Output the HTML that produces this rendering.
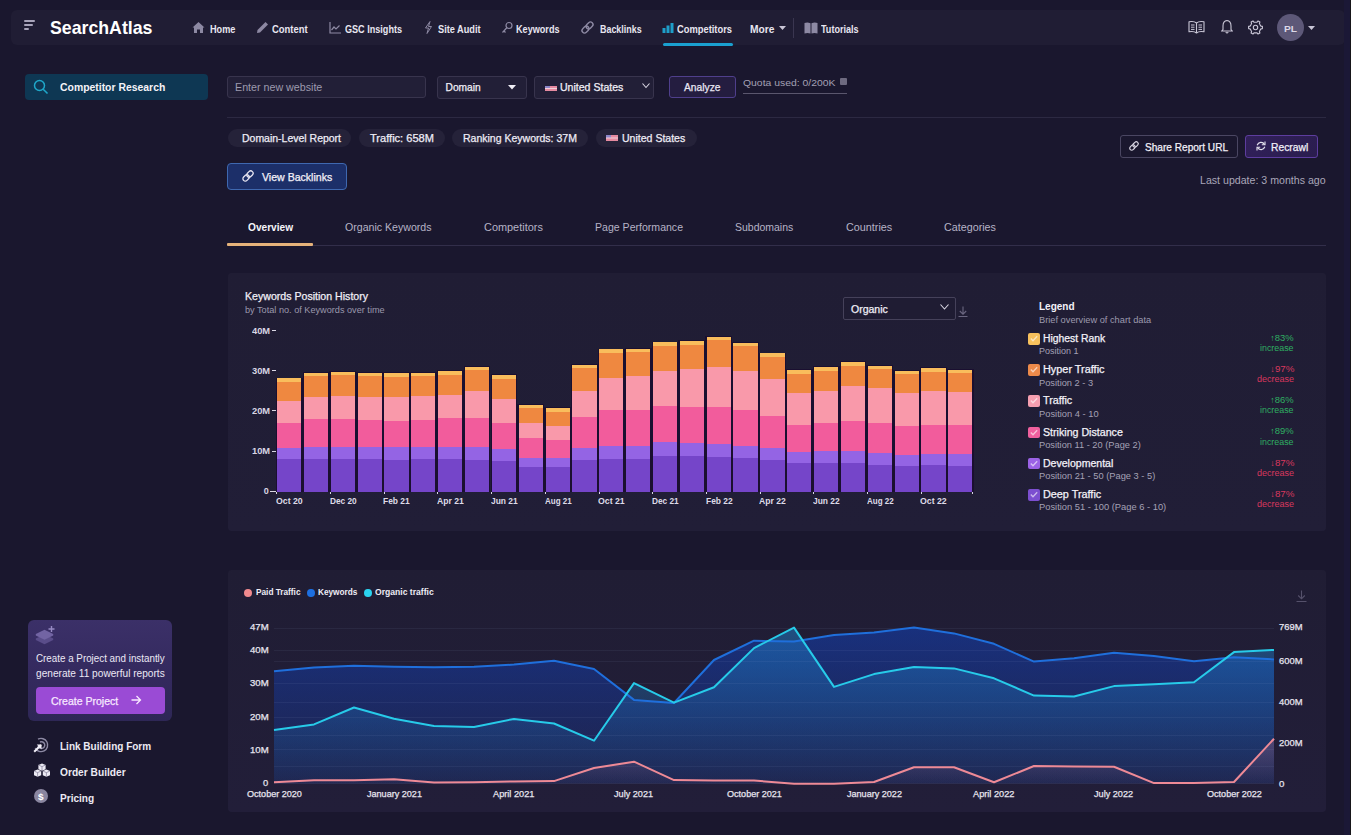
<!DOCTYPE html>
<html><head><meta charset="utf-8"><title>SearchAtlas - Competitor Research</title>
<style>
html,body{margin:0;padding:0;background:#1a172e;}
body{width:1351px;height:835px;overflow:hidden;position:relative;font-family:"Liberation Sans",sans-serif;}
.t{position:absolute;white-space:nowrap;transform-origin:0 0;}
.b{position:absolute;}
</style></head><body>
<div class="b" style="left:11px;top:10px;width:1334px;height:35px;background:#201d34;border-radius:6px;"></div>
<div class="b" style="left:24px;top:20px;width:11px;height:2px;background:#a8a4ba;border-radius:1px;"></div>
<div class="b" style="left:24px;top:24px;width:9px;height:2px;background:#a8a4ba;border-radius:1px;"></div>
<div class="b" style="left:24px;top:28px;width:5px;height:2px;background:#a8a4ba;border-radius:1px;"></div>
<div class="t" style="left:49.60px;top:19.19px;font-size:18.2px;line-height:18.2px;font-weight:bold;color:#ffffff;transform:scaleX(0.9743);">SearchAtlas</div>
<div class="t" style="left:209.60px;top:24.63px;font-size:10px;line-height:10px;font-weight:bold;color:#e8e6f0;transform:scaleX(0.9142);">Home</div>
<div class="t" style="left:272.40px;top:24.63px;font-size:10px;line-height:10px;font-weight:bold;color:#e8e6f0;transform:scaleX(0.9427);">Content</div>
<div class="t" style="left:345.00px;top:24.63px;font-size:10px;line-height:10px;font-weight:bold;color:#e8e6f0;transform:scaleX(0.9079);">GSC Insights</div>
<div class="t" style="left:437.70px;top:24.63px;font-size:10px;line-height:10px;font-weight:bold;color:#e8e6f0;transform:scaleX(0.9202);">Site Audit</div>
<div class="t" style="left:516.00px;top:24.63px;font-size:10px;line-height:10px;font-weight:bold;color:#e8e6f0;transform:scaleX(0.9102);">Keywords</div>
<div class="t" style="left:599.70px;top:24.63px;font-size:10px;line-height:10px;font-weight:bold;color:#e8e6f0;transform:scaleX(0.8910);">Backlinks</div>
<div class="t" style="left:677.00px;top:24.63px;font-size:10px;line-height:10px;font-weight:bold;color:#e8e6f0;transform:scaleX(0.9340);">Competitors</div>
<div class="t" style="left:749.60px;top:24.63px;font-size:10px;line-height:10px;font-weight:bold;color:#e8e6f0;transform:scaleX(1.0213);">More</div>
<div class="t" style="left:821.40px;top:24.63px;font-size:10px;line-height:10px;font-weight:bold;color:#e8e6f0;transform:scaleX(0.9064);">Tutorials</div>
<svg class="b" style="left:192px;top:21px;" width="13" height="13" viewBox="0 0 13 13"><path d="M6.5 1 L0.5 6.5 L2 6.5 L2 12 L5 12 L5 8.5 L8 8.5 L8 12 L11 12 L11 6.5 L12.5 6.5 Z" fill="#8d89a3"/></svg>
<svg class="b" style="left:256px;top:21px;" width="13" height="13" viewBox="0 0 13 13"><path d="M9.5 1 L12 3.5 L4 11.5 L1 12 L1.5 9 Z" fill="#8d89a3"/></svg>
<svg class="b" style="left:329px;top:22px;" width="12" height="12" viewBox="0 0 12 12"><path d="M1 0 V11 H12" stroke="#8d89a3" stroke-width="1.2" fill="none"/><path d="M2.5 8 L5 5 L7 7 L10.5 3.5" stroke="#8d89a3" stroke-width="1.2" fill="none"/></svg>
<svg class="b" style="left:424px;top:21px;" width="9" height="13" viewBox="0 0 9 13"><path d="M6 0.5 L1.5 7 L4.5 7 L3 12.5 L7.5 5.5 L4.5 5.5 Z" stroke="#8d89a3" stroke-width="1" fill="none"/></svg>
<svg class="b" style="left:501px;top:21px;" width="12" height="13" viewBox="0 0 12 13"><circle cx="8" cy="4.5" r="3" stroke="#8d89a3" stroke-width="1.2" fill="none"/><path d="M6 6.5 L1.5 11.5 M3 10 L4.5 11.5" stroke="#8d89a3" stroke-width="1.2" fill="none"/></svg>
<svg class="b" style="left:580px;top:20px;" width="15" height="15" viewBox="0 0 15 15"><g transform="rotate(-45 7.5 7.5)" stroke="#8d89a3" stroke-width="1.4" fill="none"><rect x="0.8" y="5" width="7.6" height="5" rx="2.5"/><rect x="6.6" y="5" width="7.6" height="5" rx="2.5"/></g></svg>
<svg class="b" style="left:662px;top:22px;" width="12" height="11" viewBox="0 0 12 11"><rect x="0.5" y="6" width="3" height="6" fill="#1e9ec8"/><rect x="4.5" y="3.5" width="3" height="8.5" fill="#1e9ec8"/><rect x="8.5" y="1" width="3" height="11" fill="#1e9ec8"/></svg>
<div class="b" style="left:663px;top:43px;width:70px;height:2.5px;background:#1aa0d0;border-radius:2px;"></div>
<svg class="b" style="left:779px;top:26px;" width="7" height="4" viewBox="0 0 7 4"><path d="M0 0 L7 0 L3.5 4 Z" fill="#c9c6d6"/></svg>
<div class="b" style="left:793px;top:18px;width:1px;height:20px;background:#3a3650;"></div>
<svg class="b" style="left:804px;top:22px;" width="14" height="12" viewBox="0 0 14 12"><path d="M0.5 1 Q3.5 0 6.5 1.2 V11.5 Q3.5 10.5 0.5 11.5 Z" fill="#8d89a3"/><path d="M7.5 1.2 Q10.5 0 13.5 1 V11.5 Q10.5 10.5 7.5 11.5 Z" fill="#8d89a3"/></svg>
<svg class="b" style="left:1188px;top:20px;" width="17" height="14" viewBox="0 0 17 14"><path d="M8.5 3 C6.8 1.6 3.8 1.3 1 1.8 V11.8 C3.8 11.3 6.8 11.6 8.5 13 C10.2 11.6 13.2 11.3 16 11.8 V1.8 C13.2 1.3 10.2 1.6 8.5 3 Z M8.5 3 V13" stroke="#c9c6d6" stroke-width="1.1" fill="none" stroke-linejoin="round"/><path d="M3 5 H6.5 M3 7.2 H6.5 M3 9.4 H6.5 M10.5 5 H14 M10.5 7.2 H14 M10.5 9.4 H14" stroke="#c9c6d6" stroke-width="1"/></svg>
<svg class="b" style="left:1221px;top:19px;" width="12" height="15" viewBox="0 0 12 15"><path d="M6 1.5 Q2 2 2 7 V10.5 L0.8 12 H11.2 L10 10.5 V7 Q10 2 6 1.5 Z" stroke="#c9c6d6" stroke-width="1.1" fill="none"/><path d="M4.8 13 Q6 15 7.2 13" stroke="#c9c6d6" stroke-width="1.1" fill="none"/></svg>
<svg class="b" style="left:1248px;top:20px;" width="15" height="15" viewBox="0 0 15 15"><path d="M12.09,4.85 L12.93,6.15 L14.41,6.40 L14.41,8.60 L12.93,8.85 L12.09,10.15 L11.39,11.53 L11.91,12.94 L10.01,14.04 L9.04,12.88 L7.50,12.80 L5.96,12.88 L4.99,14.04 L3.09,12.94 L3.61,11.53 L2.91,10.15 L2.07,8.85 L0.59,8.60 L0.59,6.40 L2.07,6.15 L2.91,4.85 L3.61,3.47 L3.09,2.06 L4.99,0.96 L5.96,2.12 L7.50,2.20 L9.04,2.12 L10.01,0.96 L11.91,2.06 L11.39,3.47 Z" stroke="#c9c6d6" stroke-width="1.1" fill="none" stroke-linejoin="round"/><circle cx="7.5" cy="7.5" r="2.2" stroke="#c9c6d6" stroke-width="1.1" fill="none"/></svg>
<div class="b" style="left:1276.5px;top:14px;width:27px;height:27px;background:#5d5878;border-radius:50%;"></div>
<div class="t" style="left:1283.50px;top:24.16px;font-size:9.5px;line-height:9.5px;font-weight:bold;color:#dcd9e8;transform:scaleX(1.0709);">PL</div>
<svg class="b" style="left:1308px;top:26px;" width="7" height="4" viewBox="0 0 7 4"><path d="M0 0 L7 0 L3.5 4 Z" fill="#c9c6d6"/></svg>
<div class="b" style="left:25px;top:74px;width:183px;height:25.5px;background:#0e3753;border-radius:4px;"></div>
<svg class="b" style="left:33px;top:79px;" width="16" height="16" viewBox="0 0 16 16"><circle cx="6.5" cy="6.5" r="5" stroke="#1fa7c9" stroke-width="1.5" fill="none"/><path d="M10.2 10.2 L14.5 14.5" stroke="#1fa7c9" stroke-width="1.6"/></svg>
<div class="t" style="left:60.00px;top:82.02px;font-size:11.2px;line-height:11.2px;font-weight:bold;color:#f4f3f8;transform:scaleX(0.9305);">Competitor Research</div>
<div class="b" style="left:28px;top:620px;width:144px;height:100.5px;background:linear-gradient(180deg,#3b3068 0%,#33295d 60%,#2e2756 100%);border-radius:6px;"></div>
<svg class="b" style="left:35px;top:625px;" width="21" height="21" viewBox="0 0 21 21"><path d="M0.8 13.5 L9.5 9.3 L18.2 13.5 V15 L9.5 19.2 L0.8 15 Z" fill="#5a4d8a"/><path d="M0.8 9 L9.5 4.8 L18.2 9 V10.5 L9.5 14.7 L0.8 10.5 Z" fill="#7264a3"/><path d="M16.5 1 V7 M13.5 4 H19.5" stroke="#978ac4" stroke-width="1.4"/></svg>
<div class="t" style="left:35.80px;top:653.73px;font-size:10px;line-height:10px;font-weight:normal;color:#ebe8f5;transform:scaleX(0.9811);">Create a Project and instantly</div>
<div class="t" style="left:35.80px;top:668.73px;font-size:10px;line-height:10px;font-weight:normal;color:#ebe8f5;transform:scaleX(1.0126);">generate 11 powerful reports</div>
<div class="b" style="left:35.8px;top:687px;width:129px;height:27px;background:#9a4bd5;border-radius:4px;"></div>
<div class="t" style="left:50.60px;top:695.92px;font-size:10.6px;line-height:10.6px;font-weight:normal;color:#f8e8ff;transform:scaleX(0.9919);-webkit-text-stroke:0.25px #f8e8ff;">Create Project</div>
<svg class="b" style="left:131px;top:695px;" width="11" height="10" viewBox="0 0 11 10"><path d="M0.5 5 H9.5 M5.5 1 L9.5 5 L5.5 9" stroke="#f8e8ff" stroke-width="1.3" fill="none"/></svg>
<svg class="b" style="left:33px;top:737px;" width="16" height="16" viewBox="0 0 16 16"><path d="M5 2.2 A6.6 6.6 0 1 1 2.2 11" stroke="#8d89a3" stroke-width="1.4" fill="none"/><path d="M7 5 A3.4 3.4 0 1 1 5 8.5" stroke="#8d89a3" stroke-width="1.4" fill="none"/><path d="M1.2 14.8 L8 8" stroke="#f2f0f8" stroke-width="2"/><path d="M3.8 7.5 H8.5 V12.2 Z" fill="#f2f0f8"/></svg>
<div class="t" style="left:60.00px;top:741.42px;font-size:10.6px;line-height:10.6px;font-weight:bold;color:#eceaf3;transform:scaleX(0.9444);">Link Building Form</div>
<svg class="b" style="left:33px;top:763px;" width="18" height="14" viewBox="0 0 18 14"><g fill="#eceaf3"><path d="M9 0.4 L12.6 2 V6.2 L9 7.8 L5.4 6.2 V2 Z"/><path d="M4.6 6.4 L8.2 8 V12.2 L4.6 13.8 L1 12.2 V8 Z"/><path d="M13.4 6.4 L17 8 V12.2 L13.4 13.8 L9.8 12.2 V8 Z"/></g><path d="M5.4 2 L9 3.6 L12.6 2 M9 3.6 V7.8 M1 8 L4.6 9.6 L8.2 8 M4.6 9.6 V13.8 M9.8 8 L13.4 9.6 L17 8 M13.4 9.6 V13.8" stroke="#6f6a88" stroke-width="0.6" fill="none"/></svg>
<div class="t" style="left:60.00px;top:766.72px;font-size:10.6px;line-height:10.6px;font-weight:bold;color:#eceaf3;transform:scaleX(0.9616);">Order Builder</div>
<div class="b" style="left:33.8px;top:788.5px;width:14.5px;height:14.5px;background:#8a86a0;border-radius:50%;"></div>
<div class="t" style="left:38.20px;top:792.68px;font-size:9px;line-height:9px;font-weight:bold;color:#ffffff;transform:scaleX(1.1189);">$</div>
<div class="t" style="left:60.00px;top:792.72px;font-size:10.6px;line-height:10.6px;font-weight:bold;color:#eceaf3;transform:scaleX(0.9519);">Pricing</div>
<div class="b" style="left:227.3px;top:76px;width:198.7px;height:22.3px;background:#221f37;border:1px solid #38344d;border-radius:3px;box-sizing:border-box;"></div>
<div class="t" style="left:235.20px;top:82.86px;font-size:10.2px;line-height:10.2px;font-weight:normal;color:#9d9aae;transform:scaleX(1.0487);">Enter new website</div>
<div class="b" style="left:437.2px;top:76.3px;width:89.5px;height:22.5px;background:#221f37;border:1px solid #38344d;border-radius:3px;box-sizing:border-box;"></div>
<div class="t" style="left:445.60px;top:83.26px;font-size:10.2px;line-height:10.2px;font-weight:normal;color:#f0eef6;-webkit-text-stroke:0.25px #f0eef6;">Domain</div>
<svg class="b" style="left:508px;top:85px;" width="8" height="5" viewBox="0 0 8 5"><path d="M0 0 L8 0 L4 4.5 Z" fill="#f0eef6"/></svg>
<div class="b" style="left:533.8px;top:76.3px;width:119.8px;height:22.5px;background:#221f37;border:1px solid #38344d;border-radius:3px;box-sizing:border-box;"></div>
<svg class="b" style="left:544.8px;top:86px;" width="12" height="5" viewBox="0 0 12 5"><rect width="12" height="5" fill="#e58aa0"/><rect width="5" height="2.5" fill="#8c86c8"/><rect y="2" width="12" height="1" fill="#f4d0da"/></svg>
<div class="t" style="left:559.60px;top:83.26px;font-size:10.2px;line-height:10.2px;font-weight:normal;color:#f0eef6;transform:scaleX(1.0354);-webkit-text-stroke:0.25px #f0eef6;">United States</div>
<svg class="b" style="left:642px;top:83px;" width="8" height="6" viewBox="0 0 8 6"><path d="M0.5 0.5 L4 4.5 L7.5 0.5" stroke="#d8d5e2" stroke-width="1.1" fill="none"/></svg>
<div class="b" style="left:668.7px;top:76.3px;width:67px;height:22.2px;background:#241d40;border:1px solid #4f3f8c;border-radius:3px;box-sizing:border-box;"></div>
<div class="t" style="left:684.00px;top:83.36px;font-size:10.2px;line-height:10.2px;font-weight:normal;color:#e9e6f3;transform:scaleX(1.0059);-webkit-text-stroke:0.25px #e9e6f3;">Analyze</div>
<div class="t" style="left:743.00px;top:77.60px;font-size:9.8px;line-height:9.8px;font-weight:normal;color:#a3a0b4;transform:scaleX(1.0612);">Quota used: 0/200K</div>
<div class="b" style="left:840.3px;top:78px;width:7px;height:7px;background:#6e6a80;border-radius:1px;"></div>
<div class="b" style="left:743px;top:92.5px;width:104.4px;height:1px;background:#5a566d;"></div>
<div class="b" style="left:227.4px;top:116.5px;width:1098.6px;height:1px;background:#2c2942;"></div>
<div class="b" style="left:228px;top:129.2px;width:123.39999999999998px;height:18px;background:#252239;border-radius:9px;"></div>
<div class="t" style="left:241.50px;top:134.09px;font-size:10.4px;line-height:10.4px;font-weight:normal;color:#eeecf5;transform:scaleX(1.0085);-webkit-text-stroke:0.25px #eeecf5;">Domain-Level Report</div>
<div class="b" style="left:358.8px;top:129.2px;width:85.80000000000001px;height:18px;background:#252239;border-radius:9px;"></div>
<div class="t" style="left:370.00px;top:134.09px;font-size:10.4px;line-height:10.4px;font-weight:normal;color:#eeecf5;transform:scaleX(1.0648);-webkit-text-stroke:0.25px #eeecf5;">Traffic: 658M</div>
<div class="b" style="left:452.4px;top:129.2px;width:135.80000000000007px;height:18px;background:#252239;border-radius:9px;"></div>
<div class="t" style="left:462.80px;top:134.09px;font-size:10.4px;line-height:10.4px;font-weight:normal;color:#eeecf5;transform:scaleX(1.0114);-webkit-text-stroke:0.25px #eeecf5;">Ranking Keywords: 37M</div>
<div class="b" style="left:595.6px;top:129.2px;width:101.79999999999995px;height:18px;background:#252239;border-radius:9px;"></div>
<div class="t" style="left:622.30px;top:134.09px;font-size:10.4px;line-height:10.4px;font-weight:normal;color:#eeecf5;transform:scaleX(1.0139);-webkit-text-stroke:0.25px #eeecf5;">United States</div>
<svg class="b" style="left:606px;top:135px;" width="12" height="6" viewBox="0 0 12 6"><rect width="12" height="6" fill="#e58aa0"/><rect width="5" height="3" fill="#8c86c8"/><rect y="2.5" width="12" height="1" fill="#f4d0da"/></svg>
<div class="b" style="left:226.7px;top:163px;width:120.3px;height:26.6px;background:#1c2f69;border:1px solid #3f68b0;border-radius:4px;box-sizing:border-box;"></div>
<svg class="b" style="left:241px;top:169px;" width="14" height="14" viewBox="0 0 14 14"><g transform="rotate(-45 7 7)" stroke="#e6e4f0" stroke-width="1.3" fill="none"><rect x="0.8" y="4.6" width="7" height="4.8" rx="2.4"/><rect x="6.2" y="4.6" width="7" height="4.8" rx="2.4"/></g></svg>
<div class="t" style="left:261.50px;top:172.89px;font-size:10.4px;line-height:10.4px;font-weight:normal;color:#f2f0f8;transform:scaleX(1.0164);-webkit-text-stroke:0.25px #f2f0f8;">View Backlinks</div>
<div class="b" style="left:1120px;top:135.1px;width:118px;height:22.6px;border:1px solid #4a4662;border-radius:3px;box-sizing:border-box;"></div>
<svg class="b" style="left:1128px;top:140px;" width="12" height="12" viewBox="0 0 12 12"><g transform="rotate(-45 6 6)" stroke="#d8d5e2" stroke-width="1.2" fill="none"><rect x="0.8" y="4" width="6" height="4" rx="2"/><rect x="5.2" y="4" width="6" height="4" rx="2"/></g></svg>
<div class="t" style="left:1145.30px;top:143.49px;font-size:10.4px;line-height:10.4px;font-weight:normal;color:#f2f0f8;transform:scaleX(0.9714);-webkit-text-stroke:0.25px #f2f0f8;">Share Report URL</div>
<div class="b" style="left:1245.3px;top:135.1px;width:73.2px;height:22.6px;background:linear-gradient(135deg,#31205a,#2a1d4e);border:1px solid #5d3d9f;border-radius:3px;box-sizing:border-box;"></div>
<svg class="b" style="left:1256px;top:141px;" width="10" height="10" viewBox="0 0 10 10"><path d="M8.5 3.5 A4 4 0 0 0 1.2 4.2 M1.5 6.5 A4 4 0 0 0 8.8 5.8" stroke="#e6e4f0" stroke-width="1.2" fill="none"/><path d="M9 0.5 V3.8 H5.8 M1 9.5 V6.2 H4.2" stroke="#e6e4f0" stroke-width="1.1" fill="none"/></svg>
<div class="t" style="left:1271.00px;top:143.49px;font-size:10.4px;line-height:10.4px;font-weight:normal;color:#f2f0f8;transform:scaleX(0.9904);-webkit-text-stroke:0.25px #f2f0f8;">Recrawl</div>
<div class="t" style="left:1199.80px;top:176.06px;font-size:10.2px;line-height:10.2px;font-weight:normal;color:#a9a6b9;transform:scaleX(1.0416);">Last update: 3 months ago</div>
<div class="b" style="left:227px;top:244.8px;width:1099px;height:1.6px;background:#322e4a;"></div>
<div class="b" style="left:226.7px;top:243px;width:86.6px;height:3px;background:#e5b27a;border-radius:1px;"></div>
<div class="t" style="left:247.80px;top:222.59px;font-size:10.4px;line-height:10.4px;font-weight:bold;color:#f5f4fa;transform:scaleX(0.9752);">Overview</div>
<div class="t" style="left:344.80px;top:222.59px;font-size:10.4px;line-height:10.4px;font-weight:normal;color:#b6b3c6;transform:scaleX(1.0193);">Organic Keywords</div>
<div class="t" style="left:483.50px;top:222.59px;font-size:10.4px;line-height:10.4px;font-weight:normal;color:#b6b3c6;transform:scaleX(1.0507);">Competitors</div>
<div class="t" style="left:594.50px;top:222.59px;font-size:10.4px;line-height:10.4px;font-weight:normal;color:#b6b3c6;transform:scaleX(1.0160);">Page Performance</div>
<div class="t" style="left:734.70px;top:222.59px;font-size:10.4px;line-height:10.4px;font-weight:normal;color:#b6b3c6;transform:scaleX(1.0085);">Subdomains</div>
<div class="t" style="left:845.50px;top:222.59px;font-size:10.4px;line-height:10.4px;font-weight:normal;color:#b6b3c6;transform:scaleX(1.0403);">Countries</div>
<div class="t" style="left:943.90px;top:222.59px;font-size:10.4px;line-height:10.4px;font-weight:normal;color:#b6b3c6;transform:scaleX(1.0340);">Categories</div>
<div class="b" style="left:1344px;top:0px;width:6px;height:835px;background:#1b1836;"></div>
<div class="b" style="left:1350px;top:0px;width:1px;height:835px;background:#161519;"></div>
<div class="b" style="left:228px;top:272.5px;width:1097.5px;height:258.5px;background:linear-gradient(180deg,#201d34 0%,#211e37 100%);border-radius:4px;"></div>
<div class="t" style="left:244.60px;top:292.36px;font-size:10.2px;line-height:10.2px;font-weight:normal;color:#f0eef6;transform:scaleX(1.0399);-webkit-text-stroke:0.25px #f0eef6;">Keywords Position History</div>
<div class="t" style="left:244.60px;top:306.28px;font-size:9.0px;line-height:9.0px;font-weight:normal;color:#9b98ac;transform:scaleX(1.0161);">by Total no. of Keywords over time</div>
<div class="t" style="left:251.70px;top:326.98px;font-size:9.0px;line-height:9.0px;font-weight:bold;color:#d9d6e4;transform:scaleX(1.0339);">40M</div>
<div class="b" style="left:272px;top:330.2px;width:3.5px;height:1px;background:#d9d6e4;"></div>
<div class="t" style="left:251.70px;top:367.18px;font-size:9.0px;line-height:9.0px;font-weight:bold;color:#d9d6e4;transform:scaleX(1.0339);">30M</div>
<div class="b" style="left:272px;top:370.4px;width:3.5px;height:1px;background:#d9d6e4;"></div>
<div class="t" style="left:251.70px;top:407.18px;font-size:9.0px;line-height:9.0px;font-weight:bold;color:#d9d6e4;transform:scaleX(1.0339);">20M</div>
<div class="b" style="left:272px;top:410.4px;width:3.5px;height:1px;background:#d9d6e4;"></div>
<div class="t" style="left:251.70px;top:447.38px;font-size:9.0px;line-height:9.0px;font-weight:bold;color:#d9d6e4;transform:scaleX(1.0339);">10M</div>
<div class="b" style="left:272px;top:450.6px;width:3.5px;height:1px;background:#d9d6e4;"></div>
<div class="t" style="left:263.80px;top:487.18px;font-size:9.0px;line-height:9.0px;font-weight:bold;color:#d9d6e4;">0</div>
<div class="b" style="left:270px;top:490.5px;width:5.5px;height:1px;background:#d9d6e4;"></div>
<svg class="b" style="left:0px;top:0px;pointer-events:none;" width="1351" height="835" viewBox="0 0 1351 835"><g shape-rendering="crispEdges"><rect x="275.70" y="377.50" width="26.80" height="114.10" fill="#1a0f30"/><rect x="277.00" y="378.40" width="24.2" height="113.20" fill="#f9bd5c"/><rect x="277.00" y="382.00" width="24.2" height="109.60" fill="#ef8840"/><rect x="277.00" y="400.70" width="24.2" height="90.90" fill="#f999aa"/><rect x="277.00" y="422.70" width="24.2" height="68.90" fill="#f25c9c"/><rect x="277.00" y="447.70" width="24.2" height="43.90" fill="#9464e4"/><rect x="277.00" y="459.30" width="24.2" height="32.30" fill="#7545c9"/><rect x="302.55" y="371.80" width="26.80" height="119.80" fill="#1a0f30"/><rect x="303.85" y="372.70" width="24.2" height="118.90" fill="#f9bd5c"/><rect x="303.85" y="376.30" width="24.2" height="115.30" fill="#ef8840"/><rect x="303.85" y="396.60" width="24.2" height="95.00" fill="#f999aa"/><rect x="303.85" y="419.00" width="24.2" height="72.60" fill="#f25c9c"/><rect x="303.85" y="446.50" width="24.2" height="45.10" fill="#9464e4"/><rect x="303.85" y="458.70" width="24.2" height="32.90" fill="#7545c9"/><rect x="329.40" y="370.90" width="26.80" height="120.70" fill="#1a0f30"/><rect x="330.70" y="371.80" width="24.2" height="119.80" fill="#f9bd5c"/><rect x="330.70" y="375.40" width="24.2" height="116.20" fill="#ef8840"/><rect x="330.70" y="395.80" width="24.2" height="95.80" fill="#f999aa"/><rect x="330.70" y="419.00" width="24.2" height="72.60" fill="#f25c9c"/><rect x="330.70" y="446.50" width="24.2" height="45.10" fill="#9464e4"/><rect x="330.70" y="458.70" width="24.2" height="32.90" fill="#7545c9"/><rect x="356.25" y="371.80" width="26.80" height="119.80" fill="#1a0f30"/><rect x="357.55" y="372.70" width="24.2" height="118.90" fill="#f9bd5c"/><rect x="357.55" y="376.30" width="24.2" height="115.30" fill="#ef8840"/><rect x="357.55" y="396.60" width="24.2" height="95.00" fill="#f999aa"/><rect x="357.55" y="420.20" width="24.2" height="71.40" fill="#f25c9c"/><rect x="357.55" y="446.50" width="24.2" height="45.10" fill="#9464e4"/><rect x="357.55" y="458.70" width="24.2" height="32.90" fill="#7545c9"/><rect x="383.10" y="372.40" width="26.80" height="119.20" fill="#1a0f30"/><rect x="384.40" y="373.30" width="24.2" height="118.30" fill="#f9bd5c"/><rect x="384.40" y="376.90" width="24.2" height="114.70" fill="#ef8840"/><rect x="384.40" y="396.60" width="24.2" height="95.00" fill="#f999aa"/><rect x="384.40" y="421.00" width="24.2" height="70.60" fill="#f25c9c"/><rect x="384.40" y="447.30" width="24.2" height="44.30" fill="#9464e4"/><rect x="384.40" y="459.70" width="24.2" height="31.90" fill="#7545c9"/><rect x="409.95" y="371.80" width="26.80" height="119.80" fill="#1a0f30"/><rect x="411.25" y="372.70" width="24.2" height="118.90" fill="#f9bd5c"/><rect x="411.25" y="376.30" width="24.2" height="115.30" fill="#ef8840"/><rect x="411.25" y="395.80" width="24.2" height="95.80" fill="#f999aa"/><rect x="411.25" y="420.20" width="24.2" height="71.40" fill="#f25c9c"/><rect x="411.25" y="447.00" width="24.2" height="44.60" fill="#9464e4"/><rect x="411.25" y="458.70" width="24.2" height="32.90" fill="#7545c9"/><rect x="436.80" y="370.10" width="26.80" height="121.50" fill="#1a0f30"/><rect x="438.10" y="371.00" width="24.2" height="120.60" fill="#f9bd5c"/><rect x="438.10" y="374.60" width="24.2" height="117.00" fill="#ef8840"/><rect x="438.10" y="394.80" width="24.2" height="96.80" fill="#f999aa"/><rect x="438.10" y="418.00" width="24.2" height="73.60" fill="#f25c9c"/><rect x="438.10" y="446.50" width="24.2" height="45.10" fill="#9464e4"/><rect x="438.10" y="458.70" width="24.2" height="32.90" fill="#7545c9"/><rect x="463.65" y="365.90" width="26.80" height="125.70" fill="#1a0f30"/><rect x="464.95" y="366.80" width="24.2" height="124.80" fill="#f9bd5c"/><rect x="464.95" y="370.40" width="24.2" height="121.20" fill="#ef8840"/><rect x="464.95" y="390.70" width="24.2" height="100.90" fill="#f999aa"/><rect x="464.95" y="418.00" width="24.2" height="73.60" fill="#f25c9c"/><rect x="464.95" y="447.10" width="24.2" height="44.50" fill="#9464e4"/><rect x="464.95" y="459.70" width="24.2" height="31.90" fill="#7545c9"/><rect x="490.50" y="374.40" width="26.80" height="117.20" fill="#1a0f30"/><rect x="491.80" y="375.30" width="24.2" height="116.30" fill="#f9bd5c"/><rect x="491.80" y="378.90" width="24.2" height="112.70" fill="#ef8840"/><rect x="491.80" y="398.60" width="24.2" height="93.00" fill="#f999aa"/><rect x="491.80" y="422.70" width="24.2" height="68.90" fill="#f25c9c"/><rect x="491.80" y="449.10" width="24.2" height="42.50" fill="#9464e4"/><rect x="491.80" y="460.80" width="24.2" height="30.80" fill="#7545c9"/><rect x="517.35" y="403.90" width="26.80" height="87.70" fill="#1a0f30"/><rect x="518.65" y="404.80" width="24.2" height="86.80" fill="#f9bd5c"/><rect x="518.65" y="408.40" width="24.2" height="83.20" fill="#ef8840"/><rect x="518.65" y="422.70" width="24.2" height="68.90" fill="#f999aa"/><rect x="518.65" y="438.00" width="24.2" height="53.60" fill="#f25c9c"/><rect x="518.65" y="457.90" width="24.2" height="33.70" fill="#9464e4"/><rect x="518.65" y="466.50" width="24.2" height="25.10" fill="#7545c9"/><rect x="544.20" y="407.40" width="26.80" height="84.20" fill="#1a0f30"/><rect x="545.50" y="408.30" width="24.2" height="83.30" fill="#f9bd5c"/><rect x="545.50" y="411.90" width="24.2" height="79.70" fill="#ef8840"/><rect x="545.50" y="425.70" width="24.2" height="65.90" fill="#f999aa"/><rect x="545.50" y="440.00" width="24.2" height="51.60" fill="#f25c9c"/><rect x="545.50" y="458.30" width="24.2" height="33.30" fill="#9464e4"/><rect x="545.50" y="466.90" width="24.2" height="24.70" fill="#7545c9"/><rect x="571.05" y="363.80" width="26.80" height="127.80" fill="#1a0f30"/><rect x="572.35" y="364.70" width="24.2" height="126.90" fill="#f9bd5c"/><rect x="572.35" y="368.30" width="24.2" height="123.30" fill="#ef8840"/><rect x="572.35" y="390.50" width="24.2" height="101.10" fill="#f999aa"/><rect x="572.35" y="417.20" width="24.2" height="74.40" fill="#f25c9c"/><rect x="572.35" y="448.10" width="24.2" height="43.50" fill="#9464e4"/><rect x="572.35" y="459.90" width="24.2" height="31.70" fill="#7545c9"/><rect x="597.90" y="348.50" width="26.80" height="143.10" fill="#1a0f30"/><rect x="599.20" y="349.40" width="24.2" height="142.20" fill="#f9bd5c"/><rect x="599.20" y="353.00" width="24.2" height="138.60" fill="#ef8840"/><rect x="599.20" y="377.90" width="24.2" height="113.70" fill="#f999aa"/><rect x="599.20" y="409.80" width="24.2" height="81.80" fill="#f25c9c"/><rect x="599.20" y="446.10" width="24.2" height="45.50" fill="#9464e4"/><rect x="599.20" y="458.70" width="24.2" height="32.90" fill="#7545c9"/><rect x="624.75" y="347.90" width="26.80" height="143.70" fill="#1a0f30"/><rect x="626.05" y="348.80" width="24.2" height="142.80" fill="#f9bd5c"/><rect x="626.05" y="352.40" width="24.2" height="139.20" fill="#ef8840"/><rect x="626.05" y="376.20" width="24.2" height="115.40" fill="#f999aa"/><rect x="626.05" y="410.40" width="24.2" height="81.20" fill="#f25c9c"/><rect x="626.05" y="446.20" width="24.2" height="45.40" fill="#9464e4"/><rect x="626.05" y="458.50" width="24.2" height="33.10" fill="#7545c9"/><rect x="651.60" y="341.50" width="26.80" height="150.10" fill="#1a0f30"/><rect x="652.90" y="342.40" width="24.2" height="149.20" fill="#f9bd5c"/><rect x="652.90" y="346.00" width="24.2" height="145.60" fill="#ef8840"/><rect x="652.90" y="370.80" width="24.2" height="120.80" fill="#f999aa"/><rect x="652.90" y="406.00" width="24.2" height="85.60" fill="#f25c9c"/><rect x="652.90" y="442.10" width="24.2" height="49.50" fill="#9464e4"/><rect x="652.90" y="456.00" width="24.2" height="35.60" fill="#7545c9"/><rect x="678.45" y="340.30" width="26.80" height="151.30" fill="#1a0f30"/><rect x="679.75" y="341.20" width="24.2" height="150.40" fill="#f9bd5c"/><rect x="679.75" y="344.80" width="24.2" height="146.80" fill="#ef8840"/><rect x="679.75" y="369.40" width="24.2" height="122.20" fill="#f999aa"/><rect x="679.75" y="406.50" width="24.2" height="85.10" fill="#f25c9c"/><rect x="679.75" y="442.50" width="24.2" height="49.10" fill="#9464e4"/><rect x="679.75" y="456.40" width="24.2" height="35.20" fill="#7545c9"/><rect x="705.30" y="335.80" width="26.80" height="155.80" fill="#1a0f30"/><rect x="706.60" y="336.70" width="24.2" height="154.90" fill="#f9bd5c"/><rect x="706.60" y="340.30" width="24.2" height="151.30" fill="#ef8840"/><rect x="706.60" y="366.80" width="24.2" height="124.80" fill="#f999aa"/><rect x="706.60" y="406.50" width="24.2" height="85.10" fill="#f25c9c"/><rect x="706.60" y="443.50" width="24.2" height="48.10" fill="#9464e4"/><rect x="706.60" y="457.40" width="24.2" height="34.20" fill="#7545c9"/><rect x="732.15" y="341.90" width="26.80" height="149.70" fill="#1a0f30"/><rect x="733.45" y="342.80" width="24.2" height="148.80" fill="#f9bd5c"/><rect x="733.45" y="346.40" width="24.2" height="145.20" fill="#ef8840"/><rect x="733.45" y="370.80" width="24.2" height="120.80" fill="#f999aa"/><rect x="733.45" y="410.10" width="24.2" height="81.50" fill="#f25c9c"/><rect x="733.45" y="445.80" width="24.2" height="45.80" fill="#9464e4"/><rect x="733.45" y="458.40" width="24.2" height="33.20" fill="#7545c9"/><rect x="759.00" y="352.50" width="26.80" height="139.10" fill="#1a0f30"/><rect x="760.30" y="353.40" width="24.2" height="138.20" fill="#f9bd5c"/><rect x="760.30" y="357.00" width="24.2" height="134.60" fill="#ef8840"/><rect x="760.30" y="379.00" width="24.2" height="112.60" fill="#f999aa"/><rect x="760.30" y="415.60" width="24.2" height="76.00" fill="#f25c9c"/><rect x="760.30" y="447.80" width="24.2" height="43.80" fill="#9464e4"/><rect x="760.30" y="460.00" width="24.2" height="31.60" fill="#7545c9"/><rect x="785.85" y="369.40" width="26.80" height="122.20" fill="#1a0f30"/><rect x="787.15" y="370.30" width="24.2" height="121.30" fill="#f9bd5c"/><rect x="787.15" y="373.90" width="24.2" height="117.70" fill="#ef8840"/><rect x="787.15" y="392.80" width="24.2" height="98.80" fill="#f999aa"/><rect x="787.15" y="424.80" width="24.2" height="66.80" fill="#f25c9c"/><rect x="787.15" y="452.30" width="24.2" height="39.30" fill="#9464e4"/><rect x="787.15" y="462.90" width="24.2" height="28.70" fill="#7545c9"/><rect x="812.70" y="366.40" width="26.80" height="125.20" fill="#1a0f30"/><rect x="814.00" y="367.30" width="24.2" height="124.30" fill="#f9bd5c"/><rect x="814.00" y="370.90" width="24.2" height="120.70" fill="#ef8840"/><rect x="814.00" y="390.60" width="24.2" height="101.00" fill="#f999aa"/><rect x="814.00" y="423.20" width="24.2" height="68.40" fill="#f25c9c"/><rect x="814.00" y="451.30" width="24.2" height="40.30" fill="#9464e4"/><rect x="814.00" y="462.50" width="24.2" height="29.10" fill="#7545c9"/><rect x="839.55" y="361.30" width="26.80" height="130.30" fill="#1a0f30"/><rect x="840.85" y="362.20" width="24.2" height="129.40" fill="#f9bd5c"/><rect x="840.85" y="365.80" width="24.2" height="125.80" fill="#ef8840"/><rect x="840.85" y="386.10" width="24.2" height="105.50" fill="#f999aa"/><rect x="840.85" y="420.70" width="24.2" height="70.90" fill="#f25c9c"/><rect x="840.85" y="450.90" width="24.2" height="40.70" fill="#9464e4"/><rect x="840.85" y="462.50" width="24.2" height="29.10" fill="#7545c9"/><rect x="866.40" y="364.70" width="26.80" height="126.90" fill="#1a0f30"/><rect x="867.70" y="365.60" width="24.2" height="126.00" fill="#f9bd5c"/><rect x="867.70" y="369.20" width="24.2" height="122.40" fill="#ef8840"/><rect x="867.70" y="388.10" width="24.2" height="103.50" fill="#f999aa"/><rect x="867.70" y="423.40" width="24.2" height="68.20" fill="#f25c9c"/><rect x="867.70" y="453.30" width="24.2" height="38.30" fill="#9464e4"/><rect x="867.70" y="464.50" width="24.2" height="27.10" fill="#7545c9"/><rect x="893.25" y="369.80" width="26.80" height="121.80" fill="#1a0f30"/><rect x="894.55" y="370.70" width="24.2" height="120.90" fill="#f9bd5c"/><rect x="894.55" y="374.30" width="24.2" height="117.30" fill="#ef8840"/><rect x="894.55" y="392.80" width="24.2" height="98.80" fill="#f999aa"/><rect x="894.55" y="426.20" width="24.2" height="65.40" fill="#f25c9c"/><rect x="894.55" y="454.70" width="24.2" height="36.90" fill="#9464e4"/><rect x="894.55" y="465.50" width="24.2" height="26.10" fill="#7545c9"/><rect x="920.10" y="367.00" width="26.80" height="124.60" fill="#1a0f30"/><rect x="921.40" y="367.90" width="24.2" height="123.70" fill="#f9bd5c"/><rect x="921.40" y="371.50" width="24.2" height="120.10" fill="#ef8840"/><rect x="921.40" y="390.60" width="24.2" height="101.00" fill="#f999aa"/><rect x="921.40" y="424.80" width="24.2" height="66.80" fill="#f25c9c"/><rect x="921.40" y="453.90" width="24.2" height="37.70" fill="#9464e4"/><rect x="921.40" y="465.10" width="24.2" height="26.50" fill="#7545c9"/><rect x="946.95" y="368.80" width="26.80" height="122.80" fill="#1a0f30"/><rect x="948.25" y="369.70" width="24.2" height="121.90" fill="#f9bd5c"/><rect x="948.25" y="373.30" width="24.2" height="118.30" fill="#ef8840"/><rect x="948.25" y="391.80" width="24.2" height="99.80" fill="#f999aa"/><rect x="948.25" y="425.20" width="24.2" height="66.40" fill="#f25c9c"/><rect x="948.25" y="453.90" width="24.2" height="37.70" fill="#9464e4"/><rect x="948.25" y="465.90" width="24.2" height="25.70" fill="#7545c9"/></g></svg>
<div class="b" style="left:276.3px;top:491.8px;width:1px;height:2px;background:#d9d6e4;"></div>
<div class="t" style="left:276.00px;top:496.86px;font-size:8.9px;line-height:8.9px;font-weight:bold;color:#dedbe8;transform:scaleX(0.9851);">Oct 20</div>
<div class="b" style="left:330.0px;top:491.8px;width:1px;height:2px;background:#d9d6e4;"></div>
<div class="t" style="left:329.70px;top:496.86px;font-size:8.9px;line-height:8.9px;font-weight:bold;color:#dedbe8;transform:scaleX(0.9339);">Dec 20</div>
<div class="b" style="left:383.70000000000005px;top:491.8px;width:1px;height:2px;background:#d9d6e4;"></div>
<div class="t" style="left:383.40px;top:496.86px;font-size:8.9px;line-height:8.9px;font-weight:bold;color:#dedbe8;transform:scaleX(0.9506);">Feb 21</div>
<div class="b" style="left:437.40000000000003px;top:491.8px;width:1px;height:2px;background:#d9d6e4;"></div>
<div class="t" style="left:437.10px;top:496.86px;font-size:8.9px;line-height:8.9px;font-weight:bold;color:#dedbe8;transform:scaleX(0.9676);">Apr 21</div>
<div class="b" style="left:491.1px;top:491.8px;width:1px;height:2px;background:#d9d6e4;"></div>
<div class="t" style="left:490.80px;top:496.86px;font-size:8.9px;line-height:8.9px;font-weight:bold;color:#dedbe8;transform:scaleX(0.9506);">Jun 21</div>
<div class="b" style="left:544.8px;top:491.8px;width:1px;height:2px;background:#d9d6e4;"></div>
<div class="t" style="left:544.50px;top:496.86px;font-size:8.9px;line-height:8.9px;font-weight:bold;color:#dedbe8;transform:scaleX(0.9033);">Aug 21</div>
<div class="b" style="left:598.5px;top:491.8px;width:1px;height:2px;background:#d9d6e4;"></div>
<div class="t" style="left:598.20px;top:496.86px;font-size:8.9px;line-height:8.9px;font-weight:bold;color:#dedbe8;transform:scaleX(0.9851);">Oct 21</div>
<div class="b" style="left:652.2px;top:491.8px;width:1px;height:2px;background:#d9d6e4;"></div>
<div class="t" style="left:651.90px;top:496.86px;font-size:8.9px;line-height:8.9px;font-weight:bold;color:#dedbe8;transform:scaleX(0.9339);">Dec 21</div>
<div class="b" style="left:705.9000000000001px;top:491.8px;width:1px;height:2px;background:#d9d6e4;"></div>
<div class="t" style="left:705.60px;top:496.86px;font-size:8.9px;line-height:8.9px;font-weight:bold;color:#dedbe8;transform:scaleX(0.9506);">Feb 22</div>
<div class="b" style="left:759.6px;top:491.8px;width:1px;height:2px;background:#d9d6e4;"></div>
<div class="t" style="left:759.30px;top:496.86px;font-size:8.9px;line-height:8.9px;font-weight:bold;color:#dedbe8;transform:scaleX(0.9676);">Apr 22</div>
<div class="b" style="left:813.3px;top:491.8px;width:1px;height:2px;background:#d9d6e4;"></div>
<div class="t" style="left:813.00px;top:496.86px;font-size:8.9px;line-height:8.9px;font-weight:bold;color:#dedbe8;transform:scaleX(0.9506);">Jun 22</div>
<div class="b" style="left:867.0px;top:491.8px;width:1px;height:2px;background:#d9d6e4;"></div>
<div class="t" style="left:866.70px;top:496.86px;font-size:8.9px;line-height:8.9px;font-weight:bold;color:#dedbe8;transform:scaleX(0.9033);">Aug 22</div>
<div class="b" style="left:920.7px;top:491.8px;width:1px;height:2px;background:#d9d6e4;"></div>
<div class="t" style="left:920.40px;top:496.86px;font-size:8.9px;line-height:8.9px;font-weight:bold;color:#dedbe8;transform:scaleX(0.9851);">Oct 22</div>
<div class="b" style="left:972px;top:491.8px;width:1px;height:2px;background:#d9d6e4;"></div>
<div class="b" style="left:843px;top:297.3px;width:113.4px;height:22.7px;border:1px solid #45415a;border-radius:2px;box-sizing:border-box;background:#1f1c33;"></div>
<div class="t" style="left:851.00px;top:304.73px;font-size:10.0px;line-height:10.0px;font-weight:normal;color:#f0eef6;transform:scaleX(1.0511);-webkit-text-stroke:0.25px #f0eef6;">Organic</div>
<svg class="b" style="left:940px;top:304px;" width="9" height="6" viewBox="0 0 9 6"><path d="M0.5 0.5 L4.5 5 L8.5 0.5" stroke="#d8d5e2" stroke-width="1.1" fill="none"/></svg>
<svg class="b" style="left:958px;top:306px;" width="10" height="12" viewBox="0 0 10 12"><path d="M5 0.5 V8 M1.8 5 L5 8.2 L8.2 5 M0.5 10.5 H9.5" stroke="#6a6680" stroke-width="1.1" fill="none"/></svg>
<div class="t" style="left:1039.00px;top:302.03px;font-size:10.0px;line-height:10.0px;font-weight:bold;color:#f3f1f8;">Legend</div>
<div class="t" style="left:1039.00px;top:315.75px;font-size:8.8px;line-height:8.8px;font-weight:normal;color:#9d9aae;transform:scaleX(1.0523);">Brief overview of chart data</div>
<div class="b" style="left:1028px;top:333.0px;width:12px;height:11.5px;background:#f7c15d;border-radius:2px;"></div>
<svg class="b" style="left:1030px;top:335.0px;" width="8" height="7" viewBox="0 0 8 7"><path d="M0.8 3.5 L3 5.8 L7.2 1.2" stroke="#ffffff" stroke-width="1.3" fill="none" opacity="0.6"/></svg>
<div class="t" style="left:1042.60px;top:334.03px;font-size:10.0px;line-height:10.0px;font-weight:normal;color:#f3f1f8;transform:scaleX(1.0362);-webkit-text-stroke:0.25px #f3f1f8;">Highest Rank</div>
<div class="t" style="left:1039.00px;top:347.42px;font-size:8.6px;line-height:8.6px;font-weight:normal;color:#a4a1b5;transform:scaleX(1.0433);">Position 1</div>
<div class="t" style="left:1270.00px;top:333.79px;font-size:8.4px;line-height:8.4px;font-weight:normal;color:#2fae62;transform:scaleX(1.1232);">↑83%</div>
<div class="t" style="left:1260.00px;top:344.09px;font-size:8.4px;line-height:8.4px;font-weight:normal;color:#2fae62;transform:scaleX(1.0583);">increase</div>
<div class="b" style="left:1028px;top:364.2px;width:12px;height:11.5px;background:#ec8a4a;border-radius:2px;"></div>
<svg class="b" style="left:1030px;top:366.2px;" width="8" height="7" viewBox="0 0 8 7"><path d="M0.8 3.5 L3 5.8 L7.2 1.2" stroke="#ffffff" stroke-width="1.3" fill="none" opacity="0.6"/></svg>
<div class="t" style="left:1042.60px;top:365.23px;font-size:10.0px;line-height:10.0px;font-weight:normal;color:#f3f1f8;transform:scaleX(1.0886);-webkit-text-stroke:0.25px #f3f1f8;">Hyper Traffic</div>
<div class="t" style="left:1039.00px;top:378.62px;font-size:8.6px;line-height:8.6px;font-weight:normal;color:#a4a1b5;transform:scaleX(1.0799);">Position 2 - 3</div>
<div class="t" style="left:1269.50px;top:364.99px;font-size:8.4px;line-height:8.4px;font-weight:normal;color:#d9385e;transform:scaleX(1.1660);">↓97%</div>
<div class="t" style="left:1256.80px;top:375.29px;font-size:8.4px;line-height:8.4px;font-weight:normal;color:#d9385e;transform:scaleX(1.0766);">decrease</div>
<div class="b" style="left:1028px;top:395.4px;width:12px;height:11.5px;background:#f59fb0;border-radius:2px;"></div>
<svg class="b" style="left:1030px;top:397.4px;" width="8" height="7" viewBox="0 0 8 7"><path d="M0.8 3.5 L3 5.8 L7.2 1.2" stroke="#ffffff" stroke-width="1.3" fill="none" opacity="0.6"/></svg>
<div class="t" style="left:1042.60px;top:396.43px;font-size:10.0px;line-height:10.0px;font-weight:normal;color:#f3f1f8;transform:scaleX(1.0725);-webkit-text-stroke:0.25px #f3f1f8;">Traffic</div>
<div class="t" style="left:1039.00px;top:409.82px;font-size:8.6px;line-height:8.6px;font-weight:normal;color:#a4a1b5;transform:scaleX(1.0842);">Position 4 - 10</div>
<div class="t" style="left:1270.00px;top:396.19px;font-size:8.4px;line-height:8.4px;font-weight:normal;color:#2fae62;transform:scaleX(1.1232);">↑86%</div>
<div class="t" style="left:1260.00px;top:406.49px;font-size:8.4px;line-height:8.4px;font-weight:normal;color:#2fae62;transform:scaleX(1.0583);">increase</div>
<div class="b" style="left:1028px;top:426.6px;width:12px;height:11.5px;background:#f0609e;border-radius:2px;"></div>
<svg class="b" style="left:1030px;top:428.6px;" width="8" height="7" viewBox="0 0 8 7"><path d="M0.8 3.5 L3 5.8 L7.2 1.2" stroke="#ffffff" stroke-width="1.3" fill="none" opacity="0.6"/></svg>
<div class="t" style="left:1042.60px;top:427.63px;font-size:10.0px;line-height:10.0px;font-weight:normal;color:#f3f1f8;transform:scaleX(1.0636);-webkit-text-stroke:0.25px #f3f1f8;">Striking Distance</div>
<div class="t" style="left:1039.00px;top:441.02px;font-size:8.6px;line-height:8.6px;font-weight:normal;color:#a4a1b5;transform:scaleX(1.0774);">Position 11 - 20 (Page 2)</div>
<div class="t" style="left:1270.00px;top:427.39px;font-size:8.4px;line-height:8.4px;font-weight:normal;color:#2fae62;transform:scaleX(1.1232);">↑89%</div>
<div class="t" style="left:1260.00px;top:437.69px;font-size:8.4px;line-height:8.4px;font-weight:normal;color:#2fae62;transform:scaleX(1.0583);">increase</div>
<div class="b" style="left:1028px;top:457.8px;width:12px;height:11.5px;background:#9b62e6;border-radius:2px;"></div>
<svg class="b" style="left:1030px;top:459.8px;" width="8" height="7" viewBox="0 0 8 7"><path d="M0.8 3.5 L3 5.8 L7.2 1.2" stroke="#ffffff" stroke-width="1.3" fill="none" opacity="0.6"/></svg>
<div class="t" style="left:1042.60px;top:458.83px;font-size:10.0px;line-height:10.0px;font-weight:normal;color:#f3f1f8;transform:scaleX(1.0540);-webkit-text-stroke:0.25px #f3f1f8;">Developmental</div>
<div class="t" style="left:1039.00px;top:472.22px;font-size:8.6px;line-height:8.6px;font-weight:normal;color:#a4a1b5;transform:scaleX(1.0823);">Position 21 - 50 (Page 3 - 5)</div>
<div class="t" style="left:1269.50px;top:458.59px;font-size:8.4px;line-height:8.4px;font-weight:normal;color:#d9385e;transform:scaleX(1.1660);">↓87%</div>
<div class="t" style="left:1256.80px;top:468.89px;font-size:8.4px;line-height:8.4px;font-weight:normal;color:#d9385e;transform:scaleX(1.0766);">decrease</div>
<div class="b" style="left:1028px;top:489.0px;width:12px;height:11.5px;background:#7c4fd0;border-radius:2px;"></div>
<svg class="b" style="left:1030px;top:491.0px;" width="8" height="7" viewBox="0 0 8 7"><path d="M0.8 3.5 L3 5.8 L7.2 1.2" stroke="#ffffff" stroke-width="1.3" fill="none" opacity="0.6"/></svg>
<div class="t" style="left:1042.60px;top:490.03px;font-size:10.0px;line-height:10.0px;font-weight:normal;color:#f3f1f8;transform:scaleX(1.0833);-webkit-text-stroke:0.25px #f3f1f8;">Deep Traffic</div>
<div class="t" style="left:1039.00px;top:503.42px;font-size:8.6px;line-height:8.6px;font-weight:normal;color:#a4a1b5;transform:scaleX(1.0870);">Position 51 - 100 (Page 6 - 10)</div>
<div class="t" style="left:1269.50px;top:489.79px;font-size:8.4px;line-height:8.4px;font-weight:normal;color:#d9385e;transform:scaleX(1.1660);">↓87%</div>
<div class="t" style="left:1256.80px;top:500.09px;font-size:8.4px;line-height:8.4px;font-weight:normal;color:#d9385e;transform:scaleX(1.0766);">decrease</div>
<div class="b" style="left:227.5px;top:570.3px;width:1098px;height:241.7px;background:linear-gradient(180deg,#201d34 0%,#221e39 100%);border-radius:4px;"></div>
<div class="b" style="left:244.3px;top:588.8px;width:8px;height:8px;background:#f08a8e;border-radius:50%;"></div>
<div class="t" style="left:255.50px;top:588.48px;font-size:9.0px;line-height:9.0px;font-weight:bold;color:#eeecf5;transform:scaleX(0.9173);">Paid Traffic</div>
<div class="b" style="left:307px;top:588.8px;width:7.5px;height:8px;background:#1d6fe0;border-radius:50%;"></div>
<div class="t" style="left:317.70px;top:588.48px;font-size:9.0px;line-height:9.0px;font-weight:bold;color:#eeecf5;transform:scaleX(0.9160);">Keywords</div>
<div class="b" style="left:364.2px;top:588.8px;width:7.5px;height:8px;background:#2bd3ef;border-radius:50%;"></div>
<div class="t" style="left:374.50px;top:588.48px;font-size:9.0px;line-height:9.0px;font-weight:bold;color:#eeecf5;transform:scaleX(0.9543);">Organic traffic</div>
<svg class="b" style="left:1296px;top:590px;" width="11" height="13" viewBox="0 0 11 13"><path d="M5.5 0.5 V8.5 M2.2 5.5 L5.5 8.8 L8.8 5.5 M0.5 11.5 H10.5" stroke="#55516b" stroke-width="1.1" fill="none"/></svg>
<div class="t" style="left:249.60px;top:623.11px;font-size:9.2px;line-height:9.2px;font-weight:normal;color:#e6e4ee;transform:scaleX(1.0450);-webkit-text-stroke:0.25px #e6e4ee;">47M</div>
<div class="t" style="left:249.60px;top:646.11px;font-size:9.2px;line-height:9.2px;font-weight:normal;color:#e6e4ee;transform:scaleX(1.0450);-webkit-text-stroke:0.25px #e6e4ee;">40M</div>
<div class="t" style="left:249.60px;top:679.11px;font-size:9.2px;line-height:9.2px;font-weight:normal;color:#e6e4ee;transform:scaleX(1.0450);-webkit-text-stroke:0.25px #e6e4ee;">30M</div>
<div class="t" style="left:249.60px;top:712.61px;font-size:9.2px;line-height:9.2px;font-weight:normal;color:#e6e4ee;transform:scaleX(1.0450);-webkit-text-stroke:0.25px #e6e4ee;">20M</div>
<div class="t" style="left:249.60px;top:746.01px;font-size:9.2px;line-height:9.2px;font-weight:normal;color:#e6e4ee;transform:scaleX(1.0450);-webkit-text-stroke:0.25px #e6e4ee;">10M</div>
<div class="t" style="left:262.80px;top:779.31px;font-size:9.2px;line-height:9.2px;font-weight:normal;color:#e6e4ee;transform:scaleX(1.0164);-webkit-text-stroke:0.25px #e6e4ee;">0</div>
<div class="t" style="left:1279.40px;top:622.81px;font-size:9.2px;line-height:9.2px;font-weight:normal;color:#e6e4ee;transform:scaleX(1.0212);-webkit-text-stroke:0.25px #e6e4ee;">769M</div>
<div class="t" style="left:1279.40px;top:657.31px;font-size:9.2px;line-height:9.2px;font-weight:normal;color:#e6e4ee;transform:scaleX(1.0212);-webkit-text-stroke:0.25px #e6e4ee;">600M</div>
<div class="t" style="left:1279.40px;top:698.11px;font-size:9.2px;line-height:9.2px;font-weight:normal;color:#e6e4ee;transform:scaleX(1.0212);-webkit-text-stroke:0.25px #e6e4ee;">400M</div>
<div class="t" style="left:1279.40px;top:738.51px;font-size:9.2px;line-height:9.2px;font-weight:normal;color:#e6e4ee;transform:scaleX(1.0212);-webkit-text-stroke:0.25px #e6e4ee;">200M</div>
<div class="t" style="left:1279.40px;top:779.51px;font-size:9.2px;line-height:9.2px;font-weight:normal;color:#e6e4ee;transform:scaleX(1.0555);-webkit-text-stroke:0.25px #e6e4ee;">0</div>
<div class="t" style="left:246.54px;top:790.05px;font-size:8.8px;line-height:8.8px;font-weight:normal;color:#e6e4ee;transform:scaleX(1.0300);-webkit-text-stroke:0.25px #e6e4ee;">October 2020</div>
<div class="t" style="left:366.53px;top:790.05px;font-size:8.8px;line-height:8.8px;font-weight:normal;color:#e6e4ee;transform:scaleX(1.0302);-webkit-text-stroke:0.25px #e6e4ee;">January 2021</div>
<div class="t" style="left:493.28px;top:790.05px;font-size:8.8px;line-height:8.8px;font-weight:normal;color:#e6e4ee;transform:scaleX(1.0457);-webkit-text-stroke:0.25px #e6e4ee;">April 2021</div>
<div class="t" style="left:614.48px;top:790.05px;font-size:8.8px;line-height:8.8px;font-weight:normal;color:#e6e4ee;transform:scaleX(1.0362);-webkit-text-stroke:0.25px #e6e4ee;">July 2021</div>
<div class="t" style="left:726.54px;top:790.05px;font-size:8.8px;line-height:8.8px;font-weight:normal;color:#e6e4ee;transform:scaleX(1.0300);-webkit-text-stroke:0.25px #e6e4ee;">October 2021</div>
<div class="t" style="left:846.53px;top:790.05px;font-size:8.8px;line-height:8.8px;font-weight:normal;color:#e6e4ee;transform:scaleX(1.0302);-webkit-text-stroke:0.25px #e6e4ee;">January 2022</div>
<div class="t" style="left:973.28px;top:790.05px;font-size:8.8px;line-height:8.8px;font-weight:normal;color:#e6e4ee;transform:scaleX(1.0457);-webkit-text-stroke:0.25px #e6e4ee;">April 2022</div>
<div class="t" style="left:1094.48px;top:790.05px;font-size:8.8px;line-height:8.8px;font-weight:normal;color:#e6e4ee;transform:scaleX(1.0362);-webkit-text-stroke:0.25px #e6e4ee;">July 2022</div>
<div class="t" style="left:1206.54px;top:790.05px;font-size:8.8px;line-height:8.8px;font-weight:normal;color:#e6e4ee;transform:scaleX(1.0300);-webkit-text-stroke:0.25px #e6e4ee;">October 2022</div>
<svg class="b" style="left:0px;top:0px;pointer-events:none;" width="1351" height="835" viewBox="0 0 1351 835"><defs>
<linearGradient id="gk" x1="0" y1="0" x2="0" y2="1"><stop offset="0" stop-color="#1240b8" stop-opacity="0.55"/><stop offset="1" stop-color="#1240b8" stop-opacity="0.15"/></linearGradient>
<linearGradient id="go" x1="0" y1="0" x2="0" y2="1"><stop offset="0" stop-color="#1f78c0" stop-opacity="0.55"/><stop offset="1" stop-color="#1f78c0" stop-opacity="0.05"/></linearGradient>
<linearGradient id="gp" x1="0" y1="0" x2="0" y2="1"><stop offset="0" stop-color="#e87b8f" stop-opacity="0.25"/><stop offset="1" stop-color="#e87b8f" stop-opacity="0.02"/></linearGradient>
</defs><path d="M274.0,671.3 L314.0,667.4 L354.0,665.8 L394.0,666.8 L434.0,667.2 L474.0,666.8 L514.0,664.6 L554.0,660.7 L594.0,669.0 L634.0,699.9 L674.0,703.0 L714.0,660.0 L754.0,640.7 L794.0,641.6 L834.0,634.9 L874.0,632.4 L914.0,627.6 L954.0,633.4 L994.0,643.8 L1034.0,661.6 L1074.0,658.3 L1114.0,652.8 L1154.0,656.1 L1194.0,661.2 L1234.0,657.2 L1274.0,659.4 L1274,783.4 L274,783.4 Z" fill="url(#gk)"/><path d="M274.0,730.0 L314.0,724.4 L354.0,707.5 L394.0,718.7 L434.0,725.9 L474.0,726.9 L514.0,718.9 L554.0,723.5 L594.0,740.7 L634.0,683.1 L674.0,702.6 L714.0,687.3 L754.0,648.1 L794.0,627.6 L834.0,686.9 L874.0,674.1 L914.0,667.0 L954.0,668.4 L994.0,678.3 L1034.0,695.6 L1074.0,696.5 L1114.0,686.1 L1154.0,684.3 L1194.0,682.3 L1234.0,652.1 L1274.0,649.9 L1274,783.4 L274,783.4 Z" fill="url(#go)"/><path d="M274.0,782.3 L314.0,780.2 L354.0,780.2 L394.0,779.2 L434.0,782.5 L474.0,782.3 L514.0,781.5 L554.0,781.1 L594.0,768.0 L634.0,761.7 L674.0,780.1 L714.0,780.5 L754.0,780.5 L794.0,783.7 L834.0,783.7 L874.0,782.0 L914.0,767.3 L954.0,767.3 L994.0,782.3 L1034.0,766.0 L1074.0,766.5 L1114.0,766.7 L1154.0,783.1 L1194.0,783.1 L1234.0,782.0 L1274.0,738.7 L1274,783.4 L274,783.4 Z" fill="url(#gp)"/><line x1="274" x2="1274" y1="628.5" y2="628.5" stroke="#b8c0f0" stroke-opacity="0.065" stroke-width="1"/><line x1="274" x2="1274" y1="650.5" y2="650.5" stroke="#b8c0f0" stroke-opacity="0.065" stroke-width="1"/><line x1="274" x2="1274" y1="661.5" y2="661.5" stroke="#b8c0f0" stroke-opacity="0.065" stroke-width="1"/><line x1="274" x2="1274" y1="683.5" y2="683.5" stroke="#b8c0f0" stroke-opacity="0.065" stroke-width="1"/><line x1="274" x2="1274" y1="702.5" y2="702.5" stroke="#b8c0f0" stroke-opacity="0.065" stroke-width="1"/><line x1="274" x2="1274" y1="717.5" y2="717.5" stroke="#b8c0f0" stroke-opacity="0.065" stroke-width="1"/><line x1="274" x2="1274" y1="735.5" y2="735.5" stroke="#b8c0f0" stroke-opacity="0.065" stroke-width="1"/><line x1="274" x2="1274" y1="749.5" y2="749.5" stroke="#b8c0f0" stroke-opacity="0.065" stroke-width="1"/><line x1="274" x2="1274" y1="766.5" y2="766.5" stroke="#b8c0f0" stroke-opacity="0.065" stroke-width="1"/><line x1="274" x2="1274" y1="783.5" y2="783.5" stroke="#b8c0f0" stroke-opacity="0.065" stroke-width="1"/><path d="M274.0,671.3 L314.0,667.4 L354.0,665.8 L394.0,666.8 L434.0,667.2 L474.0,666.8 L514.0,664.6 L554.0,660.7 L594.0,669.0 L634.0,699.9 L674.0,703.0 L714.0,660.0 L754.0,640.7 L794.0,641.6 L834.0,634.9 L874.0,632.4 L914.0,627.6 L954.0,633.4 L994.0,643.8 L1034.0,661.6 L1074.0,658.3 L1114.0,652.8 L1154.0,656.1 L1194.0,661.2 L1234.0,657.2 L1274.0,659.4" stroke="#1f6fdc" stroke-width="2" fill="none" stroke-linejoin="round"/><path d="M274.0,730.0 L314.0,724.4 L354.0,707.5 L394.0,718.7 L434.0,725.9 L474.0,726.9 L514.0,718.9 L554.0,723.5 L594.0,740.7 L634.0,683.1 L674.0,702.6 L714.0,687.3 L754.0,648.1 L794.0,627.6 L834.0,686.9 L874.0,674.1 L914.0,667.0 L954.0,668.4 L994.0,678.3 L1034.0,695.6 L1074.0,696.5 L1114.0,686.1 L1154.0,684.3 L1194.0,682.3 L1234.0,652.1 L1274.0,649.9" stroke="#27cbe9" stroke-width="2" fill="none" stroke-linejoin="round"/><path d="M274.0,782.3 L314.0,780.2 L354.0,780.2 L394.0,779.2 L434.0,782.5 L474.0,782.3 L514.0,781.5 L554.0,781.1 L594.0,768.0 L634.0,761.7 L674.0,780.1 L714.0,780.5 L754.0,780.5 L794.0,783.7 L834.0,783.7 L874.0,782.0 L914.0,767.3 L954.0,767.3 L994.0,782.3 L1034.0,766.0 L1074.0,766.5 L1114.0,766.7 L1154.0,783.1 L1194.0,783.1 L1234.0,782.0 L1274.0,738.7" stroke="#ee8a96" stroke-width="2" fill="none" stroke-linejoin="round"/></svg>
</body></html>
